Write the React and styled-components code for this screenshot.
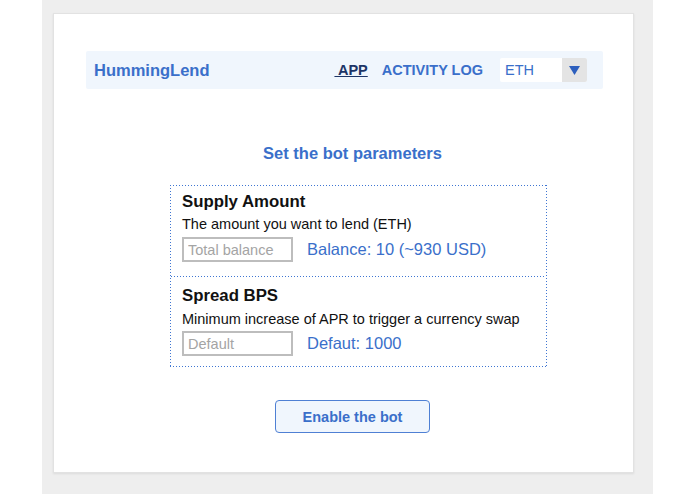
import React from 'react';
import styled, { createGlobalStyle } from 'styled-components';

const GlobalStyle = createGlobalStyle`
    body {
        margin: 0;
        background: #ffffff;
        font-family: "Liberation Sans", Arial, sans-serif;
    }
`;

const dotsX = 'repeating-linear-gradient(to right, #3f76d2 0 1px, transparent 1px 3px)';
const dotsY = 'repeating-linear-gradient(to bottom, #3f76d2 0 1px, transparent 1px 3px)';

const Shell = styled.div`
    width: 611px;
    height: 494px;
    margin-left: 42px;
    background: #eeeeee;
    padding: 13px 19px 21px 11px;
    box-sizing: border-box;
`;

const Card = styled.div`
    height: 100%;
    background: #ffffff;
    border: 1px solid #e2e2e2;
    box-shadow: 0 1px 2px rgba(0, 0, 0, 0.08);
    box-sizing: border-box;
    padding: 37px 30px 0 32px;
`;

const Nav = styled.nav`
    display: flex;
    align-items: center;
    height: 38px;
    background: #f0f6fd;
    border-radius: 2px;
    padding: 0 16px 0 8px;
`;

const Brand = styled.div`
    font-size: 16.5px;
    font-weight: bold;
    color: #3a6fca;
    flex: 1;
`;

const NavLink = styled.a`
    font-size: 14.5px;
    font-weight: bold;
    color: ${props => (props.active ? '#1d3567' : '#3a6fca')};
    text-decoration: ${props => (props.active ? 'underline' : 'none')};
    margin-right: ${props => props.gap}px;
    white-space: pre;
`;

const Select = styled.div`
    display: flex;
    width: 87px;
    height: 24px;
    background: #ffffff;
    border-radius: 2px;
    overflow: hidden;
`;

const SelectValue = styled.div`
    flex: 1;
    font-size: 14.5px;
    color: #3a6fca;
    line-height: 24px;
    padding-left: 5px;
`;

const SelectArrow = styled.div`
    width: 25px;
    background: #e4e4e4;
    display: flex;
    align-items: center;
    justify-content: center;
`;

const Main = styled.div`
    display: flex;
    flex-direction: column;
    align-items: center;
    padding-left: 16px;
`;

const Title = styled.h2`
    margin: 54px 0 0;
    font-size: 16.5px;
    font-weight: bold;
    color: #3a6fca;
    line-height: 20px;
`;

const ParamBox = styled.div`
    width: 377px;
    margin: 22px 0 0 12px;
    padding: 1px;
    box-sizing: border-box;
    background:
        ${dotsX} top left / 100% 1px no-repeat,
        ${dotsX} bottom left / 100% 1px no-repeat,
        ${dotsY} top left / 1px 100% no-repeat,
        ${dotsY} top right / 1px 100% no-repeat;
`;

const Section = styled.div`
    padding: ${props => (props.first ? 6 : 10)}px 11px 0;
    height: ${props => props.h}px;
    box-sizing: border-box;
    background: ${props => (props.first ? 'none' : `${dotsX} top left / 100% 1px no-repeat`)};
`;

const Label = styled.div`
    font-size: 16.8px;
    font-weight: bold;
    color: #111111;
    line-height: 20px;
`;

const Desc = styled.div`
    font-size: 14.5px;
    color: #111111;
    line-height: 18px;
    margin-top: ${props => props.gap}px;
`;

const InputRow = styled.div`
    display: flex;
    align-items: center;
    margin-top: ${props => props.gap}px;
`;

const Input = styled.input`
    width: 111px;
    height: 25px;
    box-sizing: border-box;
    border: 2px solid #bdbdbd;
    border-radius: 0;
    padding: 0 4px;
    font-family: "Liberation Sans", Arial, sans-serif;
    font-size: 14.5px;
    outline: none;

    &::placeholder {
        color: #a4a4a4;
    }
`;

const Hint = styled.div`
    font-size: 16.5px;
    color: #3a6fca;
    margin-left: 14px;
`;

const Button = styled.button`
    margin-top: 33px;
    width: 155px;
    height: 33px;
    background: #f0f6fd;
    border: 1px solid #4f80d4;
    border-radius: 4px;
    font-family: "Liberation Sans", Arial, sans-serif;
    font-size: 14.5px;
    font-weight: bold;
    color: #3a6fca;
`;

const App = () => {
    return (
        <>
            <GlobalStyle />
            <Shell>
                <Card>
                    <Nav>
                        <Brand>HummingLend</Brand>
                        <NavLink active gap={14}>{' APP'}</NavLink>
                        <NavLink gap={17}>ACTIVITY LOG</NavLink>
                        <Select>
                            <SelectValue>ETH</SelectValue>
                            <SelectArrow>
                                <svg width="11" height="9" viewBox="0 0 11 9">
                                    <path d="M0 0 L11 0 L5.5 9 Z" fill="#2d5fbd" />
                                </svg>
                            </SelectArrow>
                        </Select>
                    </Nav>
                    <Main>
                        <Title>Set the bot parameters</Title>
                        <ParamBox>
                            <Section first h={90}>
                                <Label>Supply Amount</Label>
                                <Desc gap={3}>The amount you want to lend (ETH)</Desc>
                                <InputRow gap={4}>
                                    <Input placeholder="Total balance" />
                                    <Hint>Balance: 10 (~930 USD)</Hint>
                                </InputRow>
                            </Section>
                            <Section h={90}>
                                <Label>Spread BPS</Label>
                                <Desc gap={4}>Minimum increase of APR to trigger a currency swap</Desc>
                                <InputRow gap={3}>
                                    <Input placeholder="Default" />
                                    <Hint>Defaut: 1000</Hint>
                                </InputRow>
                            </Section>
                        </ParamBox>
                        <Button>Enable the bot</Button>
                    </Main>
                </Card>
            </Shell>
        </>
    );
};

export default App;
